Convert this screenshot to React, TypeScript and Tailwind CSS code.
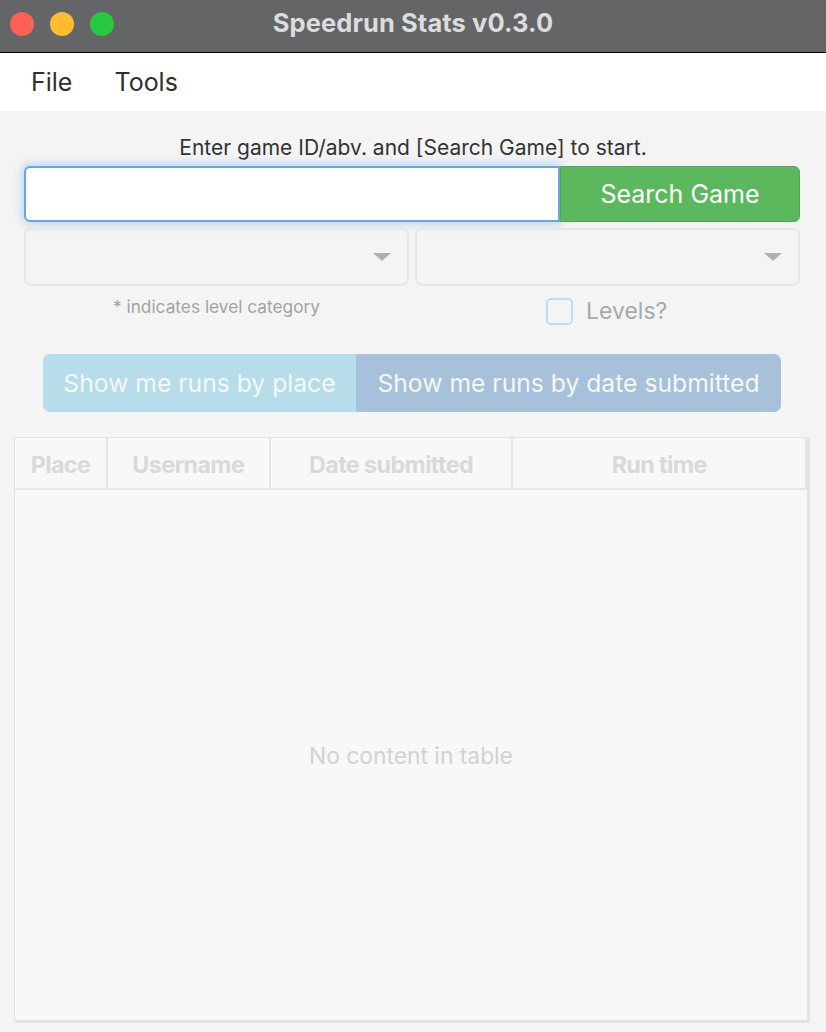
import React from "react";

export default function App() {
  const font = { fontFamily: "Inter, 'Noto Sans', sans-serif" };
  return (
    <div className="w-[826px] h-[1032px] bg-[#f4f4f4] flex flex-col overflow-hidden" style={font}>
      {/* Title bar */}
      <div className="h-[53px] bg-[#646567] border-b border-black relative flex items-center justify-center shrink-0">
        <div className="absolute left-[10px] top-[12px] flex gap-[16px]">
          <div className="w-[24px] h-[24px] rounded-full bg-[#fe5f57]" />
          <div className="w-[24px] h-[24px] rounded-full bg-[#febc2e]" />
          <div className="w-[24px] h-[24px] rounded-full bg-[#28c840]" />
        </div>
        <span className="text-[25.5px] font-bold text-[#dcdcdd] tracking-[0.1px] mb-[6px] leading-[30px]">Speedrun Stats v0.3.0</span>
      </div>
      {/* Menu bar */}
      <div className="h-[58px] bg-white flex items-center pl-[31px] pt-[2px] gap-[42px] text-[25px] text-[#2e2e2e] shrink-0">
        <span>File</span>
        <span>Tools</span>
      </div>
      {/* Content */}
      <div className="flex flex-col">
        <div className="text-center text-[21px] text-[#333] mt-[24px] leading-[26px]">
          Enter game ID/abv. and [Search Game] to start.
        </div>
        <div className="flex mt-[5px] ml-[24px] w-[776px] h-[56px]">
          <div className="flex-1 bg-white border-2 border-[#64a7e2] rounded-l-[6px] shadow-[0_0_8px_3px_rgba(100,170,230,0.35)]" />
          <button className="w-[240px] bg-[#5cb85c] border border-[#53a953] rounded-r-[6px] text-white text-[25px] pt-[2px]">
            Search Game
          </button>
        </div>
        <div className="flex mt-[6px] ml-[24px] gap-[6px] h-[58px]">
          <div className="w-[385px] border-2 border-[#e6e6e6] rounded-[7px] flex items-center justify-end pr-[16px]">
            <div className="w-0 h-0 border-l-[9px] border-r-[9px] border-t-[8px] border-l-transparent border-r-transparent border-t-[#b0b0b0]" />
          </div>
          <div className="w-[385px] border-2 border-[#e6e6e6] rounded-[7px] flex items-center justify-end pr-[16px]">
            <div className="w-0 h-0 border-l-[9px] border-r-[9px] border-t-[8px] border-l-transparent border-r-transparent border-t-[#b0b0b0]" />
          </div>
        </div>
        <div className="flex ml-[24px] mt-[9px] h-[32px]">
          <div className="w-[385px] text-center text-[17.3px] text-[#a3a3a3] leading-[24px]">
            * indicates level category
          </div>
          <div className="flex items-center ml-[137px] gap-[13px]">
            <div className="w-[27px] h-[27px] border-2 border-[#b8e0ee] rounded-[5px]" />
            <span className="text-[23px] text-[#a8a8a8]">Levels?</span>
          </div>
        </div>
        <div className="flex ml-[43px] mt-[27px] h-[58px] text-[24.7px] text-[#f4f8fa]">
          <button className="w-[313px] bg-[#b6dde9] rounded-l-[7px] pt-[2px]">Show me runs by place</button>
          <button className="w-[425px] bg-[#a6c1d9] rounded-r-[7px] pt-[2px]">Show me runs by date submitted</button>
        </div>
        {/* Table */}
        <div className="ml-[14px] mt-[25px] w-[796px] h-[586px] border-l border-t border-[#e3e3e3] border-r-[3px] border-b-[3px] bg-[#f8f8f8] flex flex-col">
          <div className="flex h-[52px] border-b-2 border-[#e6e6e6] text-[23.3px] font-bold text-[#d9d9d9] tracking-[-0.6px]">
            <div className="w-[93px] flex items-center justify-center border-r-2 border-[#e6e6e6] pt-[4px]">Place</div>
            <div className="w-[163px] flex items-center justify-center border-r-2 border-[#e6e6e6] pt-[4px]">Username</div>
            <div className="w-[243px] flex items-center justify-center border-r-2 border-[#e6e6e6] pt-[4px]">Date submitted</div>
            <div className="w-[294px] flex items-center justify-center border-r-2 border-[#e6e6e6] pt-[4px]">Run time</div>
          </div>
          <div className="flex-1 flex items-center justify-center text-[22.8px] text-[#d2d2d2] pt-[2px]">
            No content in table
          </div>
        </div>
      </div>
    </div>
  );
}
